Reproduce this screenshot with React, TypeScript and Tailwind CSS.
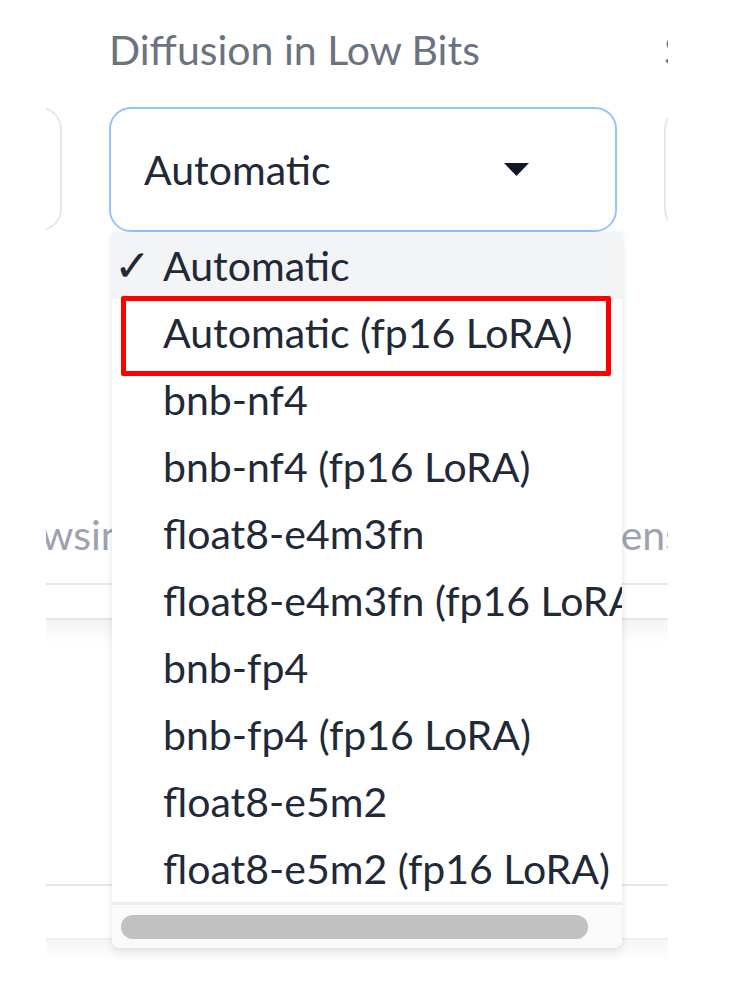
import React from "react";

const options = [
  "Automatic",
  "Automatic (fp16 LoRA)",
  "bnb-nf4",
  "bnb-nf4 (fp16 LoRA)",
  "float8-e4m3fn",
  "float8-e4m3fn (fp16 LoRA)",
  "bnb-fp4",
  "bnb-fp4 (fp16 LoRA)",
  "float8-e5m2",
  "float8-e5m2 (fp16 LoRA)",
];

export default function App() {
  return (
    <div
      className="relative w-[730px] h-[982px] bg-white overflow-hidden"
      style={{ fontFamily: "Lato, 'Open Sans', sans-serif" }}
    >
      {/* clipped page region */}
      <div className="ml-[46px] w-[622px] h-[982px] overflow-hidden">
        <div className="flex ml-[-284px] gap-[47px] pt-[22px]">
          {/* left column (clipped) */}
          <div className="w-[300px] shrink-0 flex flex-col">
            <div className="h-[56px]" />
            <div className="mt-[29px] h-[124px] rounded-[22px] border-2 border-[#e5e7eb] bg-white" />
          </div>
          {/* middle column */}
          <div className="w-[508px] shrink-0 flex flex-col">
            <div className="h-[56px] text-[41px] leading-[56px] text-[#6b7280] whitespace-nowrap">
              Diffusion in Low Bits
            </div>
            <div className="mt-[29px] h-[125px] rounded-[22px] border-2 border-[#93c5fd] bg-white flex items-center justify-between pl-[33px] pr-[86px]">
              <span className="text-[41px] text-[#1f2937]">Automatic</span>
              <svg width="25" height="13" viewBox="0 0 25 13">
                <path d="M0 0 L25 0 L12.5 13 Z" fill="#111827" />
              </svg>
            </div>
          </div>
          {/* right column (clipped) */}
          <div className="w-[300px] shrink-0 flex flex-col">
            <div className="h-[56px] text-[41px] leading-[56px] text-[#6b7280] whitespace-nowrap">
              Sampler
            </div>
            <div className="mt-[29px] h-[124px] rounded-[22px] border-2 border-[#e5e7eb] bg-white" />
          </div>
        </div>

        {/* tabs row */}
        <div className="mt-[275px] flex text-[41px] leading-[56px] text-[#9ca3af] whitespace-nowrap">
          <div className="w-[203px] ml-[-104px] shrink-0 text-right">Browsing</div>
          <div className="ml-[417px] shrink-0">Extensions</div>
        </div>
        <div className="mt-[20px] border-t-2 border-[#e5e7eb]" />
        <div className="mt-[33px] border-t-2 border-[#e5e7eb]" />
        <div className="h-[24px] bg-gradient-to-b from-[#f3f4f6] to-white" />
        <div className="mt-[240px] border-t-2 border-[#e5e7eb]" />
        <div className="mt-[52px] border-t-2 border-[#eeeff2]" />
        <div className="h-[20px] bg-gradient-to-b from-[#f5f6f8] to-white" />
      </div>

      {/* dropdown menu */}
      <div className="absolute left-[112px] top-[232px] w-[510px] h-[716px] bg-white rounded-b-[8px] overflow-hidden shadow-[0_6px_10px_rgba(0,0,0,0.08),0_0_4px_rgba(0,0,0,0.06)] flex flex-col">
        <ul className="flex flex-col">
          {options.map((o, i) => (
            <li
              key={o}
              className={`relative h-[67px] flex items-center pl-[51px] whitespace-nowrap text-[41px] text-[#1f2937] ${
                i === 0 ? "bg-[#f3f4f6]" : ""
              }`}
            >
              {i === 0 && (
                <span
                  className="absolute left-[2px] text-[44px] text-[#1f2937]"
                  style={{ fontFamily: "'DejaVu Sans', sans-serif" }}
                >
                  ✓
                </span>
              )}
              {o}
            </li>
          ))}
        </ul>
        <div className="mt-auto h-[46px] border-t-[3px] border-[#ececec] bg-[#fafafa] flex items-center pl-[9px]">
          <div className="w-[467px] h-[24px] rounded-full bg-[#c1c1c1]" />
        </div>
      </div>

      {/* red highlight annotation */}
      <div className="absolute left-[121px] top-[296px] w-[490px] h-[80px] border-[5px] border-[#ff0000] rounded-[2px]" />
    </div>
  );
}
